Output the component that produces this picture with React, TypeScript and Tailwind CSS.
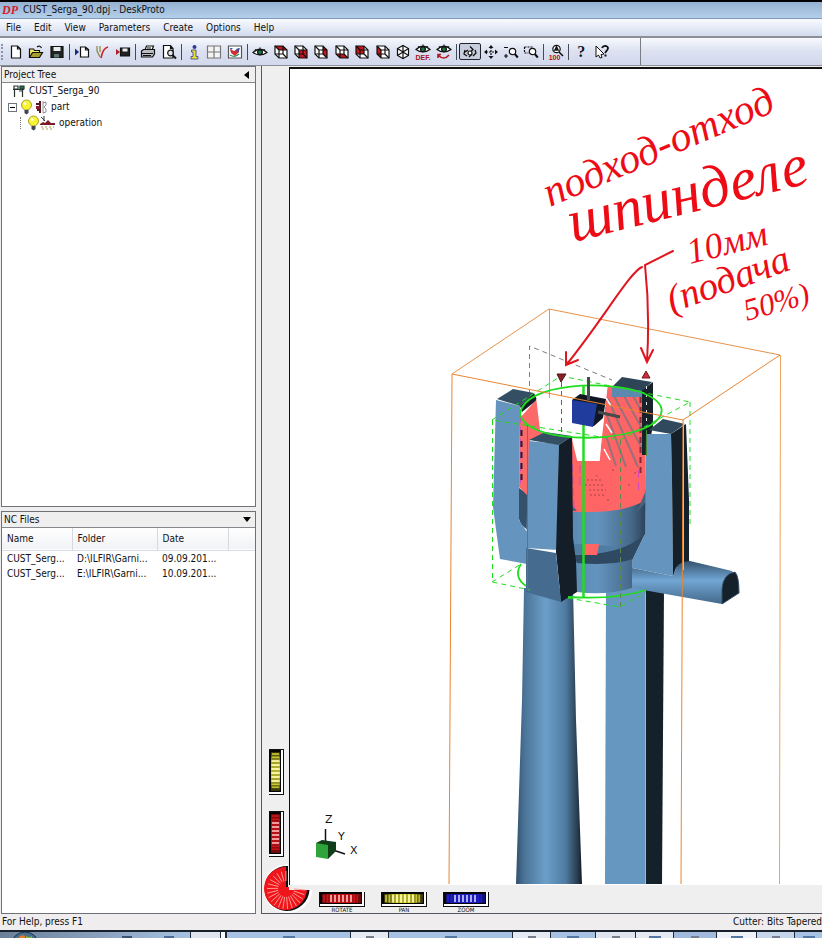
import React from 'react';

const menus = ['File', 'Edit', 'View', 'Parameters', 'Create', 'Options', 'Help'];

const files = [
  { name: 'CUST_Serg...', folder: 'D:\\ILFIR\\Garni...', date: '09.09.201...' },
  { name: 'CUST_Serg...', folder: 'E:\\ILFIR\\Garni...', date: '10.09.201...' },
];

type Kids = { children?: React.ReactNode };

function Glyph({ children }: Kids) {
  return (
    <svg width="16" height="16" viewBox="0 0 16 16" fill="none" stroke="#111" strokeWidth="1.2" aria-hidden="true">
      {children}
    </svg>
  );
}

function Tool({ label, active, children }: Kids & { label: string; active?: boolean }) {
  return (
    <button
      type="button"
      aria-label={label}
      title={label}
      className={
        active
          ? 'flex h-[17px] flex-1 items-center justify-center rounded-xs border border-[#20242c] bg-[#c9cede]'
          : 'flex h-[17px] flex-1 items-center justify-center'
      }
    >
      {children}
    </button>
  );
}

function Divider() {
  return (
    <div className="flex w-[5px] justify-center">
      <div className="h-4 w-px bg-[#444b58]" />
    </div>
  );
}

function CubeIcon({ face }: { face: string }) {
  return (
    <Glyph>
      <path d="M2 2h8l4 4v8H6l-4-4z" fill="#fff" stroke="none" />
      <path d={face} fill="#c4161c" stroke="none" />
      <path d="M2 2h8l4 4v8H6l-4-4z" />
      <path d="M6 6h8M6 6v8M2 2l4 4M10 2v8H2M10 10l4 4" />
    </Glyph>
  );
}

function Eye({ y = 0 }: { y?: number }) {
  return (
    <g transform={`translate(0 ${y})`}>
      <path d="M1 8.500Q8 2 15 8.500Q8 13.500 1 8.500z" fill="#fff" />
      <circle cx="8" cy="8.300" r="2.400" fill="#1f7a46" />
      <path d="M3 5.500l1.500 1M8 3.500v1.200M13 5.500l-1.500 1" />
    </g>
  );
}

function Magnifier() {
  return (
    <>
      <circle cx="9.500" cy="7.500" r="3.200" fill="#fff" />
      <path d="M11.800 10l3 3.500" strokeWidth="2" />
    </>
  );
}

function Toolbar() {
  return (
    <div
      role="toolbar"
      aria-label="Main toolbar"
      className="flex h-7 shrink-0 border-b border-[#8b8f96] bg-linear-to-b from-[#f7f9fd] via-[#dbe1f1] to-[#d3d9ec]"
    >
      <div className="flex w-[641px] items-center border-r border-[#777c85] pl-px">
        <div className="mr-[3px] h-4 border-l-2 border-dotted border-[#8c95aa]" />
        <div className="flex w-[61px]">
          <Tool label="New">
            <Glyph><path d="M3.500 2h6l3 3v9h-9zM9.500 2v3h3" fill="#fff" /></Glyph>
          </Tool>
          <Tool label="Open">
            <Glyph>
              <path d="M1.500 13V5h4l1 1.500h5V9" fill="#f4ea72" />
              <path d="M1.500 13.500l3-5h10l-3 5z" fill="#a79d2c" />
              <path d="M9 3q3-2 4.500 1" />
            </Glyph>
          </Tool>
          <Tool label="Save">
            <Glyph>
              <path d="M2 2.500h12v11H2z" fill="#222" />
              <path d="M4.500 3h7v4h-7z" fill="#e9edf2" stroke="none" />
              <path d="M5 10h5v3.500H5z" fill="#5d7a70" stroke="none" />
            </Glyph>
          </Tool>
        </div>
        <Divider />
        <div className="flex w-[61px]">
          <Tool label="Import geometry">
            <Glyph>
              <path d="M1 4.500l4 3.500-4 3.500z" fill="#1b2a80" stroke="none" />
              <path d="M6.500 3h5l3 2.500v7.500h-8zM11.500 3v3h3" fill="#fff" />
            </Glyph>
          </Tool>
          <Tool label="Calculate toolpaths">
            <Glyph>
              <path d="M3 2v5l3 6M6 2v6" stroke="#8e8436" />
              <path d="M7 14Q9 4 14 3" stroke="#d21f28" strokeWidth="1.600" />
            </Glyph>
          </Tool>
          <Tool label="Write NC file">
            <Glyph>
              <path d="M1 5l4 3-4 3z" fill="#b01e2a" stroke="none" />
              <path d="M5.500 4h9v8h-9z" fill="#222" />
              <path d="M7.500 4.500h5v3h-5z" fill="#eee" stroke="none" />
            </Glyph>
          </Tool>
        </div>
        <Divider />
        <div className="flex w-[41px]">
          <Tool label="Print">
            <Glyph>
              <path d="M5 6l1.500-4h7L12 6" fill="#fff" />
              <path d="M1.500 7l2-1.500h11V10l-2 3h-11z" fill="#b9bdc4" />
              <path d="M2 9.500h11M3 11.500h8M7 4h4" />
            </Glyph>
          </Tool>
          <Tool label="Print preview">
            <Glyph>
              <path d="M2.500 1.500h7l2.500 3v9.500h-9.500zM9.500 1.500v3h2.500" fill="#fff" />
              <circle cx="9.500" cy="9" r="2.800" fill="#dfe5ee" />
              <path d="M11.500 11l3.500 3.500" strokeWidth="1.800" />
            </Glyph>
          </Tool>
        </div>
        <Divider />
        <div className="flex w-[61px]">
          <Tool label="Information">
            <Glyph>
              <path d="M5.500 6h4.500v6.500h2V15H5v-2.500h2V8H5.500z" fill="#ece02c" stroke="#39408e" strokeWidth="0.800" />
              <circle cx="8.500" cy="3" r="2" fill="#2c3a9a" stroke="none" />
            </Glyph>
          </Tool>
          <Tool label="Four views">
            <Glyph><path d="M1.500 2h13v12h-13zM8 2v12M1.500 8h13" fill="#f4f4f4" stroke="#777" /></Glyph>
          </Tool>
          <Tool label="Render">
            <Glyph>
              <path d="M1.500 2h13v12h-13z" fill="#fff" stroke="#555" />
              <path d="M3 5l4 2 5-3v4l-4 4-4-3z" fill="#cf3038" stroke="none" />
              <path d="M9 5l4-1-2 5zM3 4h3l-2 2z" fill="#2b56a5" stroke="none" />
              <path d="M3 11q5 3 9-1" stroke="#329060" />
            </Glyph>
          </Tool>
        </div>
        <Divider />
        <div className="flex w-[204px]">
          <Tool label="View"><Glyph><Eye /></Glyph></Tool>
          <Tool label="Top view"><CubeIcon face="M2 2h8l4 4H6z" /></Tool>
          <Tool label="Front view"><CubeIcon face="M6 6h8v8H6z" /></Tool>
          <Tool label="Right view"><CubeIcon face="M10 2l4 4v8l-4-4z" /></Tool>
          <Tool label="Bottom view"><CubeIcon face="M2 10h8l4 4H6z" /></Tool>
          <Tool label="Back view"><CubeIcon face="M2 2h8v8H2z" /></Tool>
          <Tool label="Left view"><CubeIcon face="M2 2l4 4v8l-4-4z" /></Tool>
          <Tool label="Isometric view">
            <Glyph>
              <path d="M8 1.500l5.500 3v7L8 14.500l-5.500-3v-7z" fill="#fff" />
              <path d="M8 1.500v13M2.500 4.500l11 7M13.500 4.500l-11 7" />
            </Glyph>
          </Tool>
          <Tool label="Default view">
            <Glyph>
              <Eye y={-3} />
              <text x="8" y="16" textAnchor="middle" fill="#a5121a" stroke="none" fontSize="7" fontWeight="700" fontFamily="Liberation Sans, sans-serif">DEF.</text>
            </Glyph>
          </Tool>
          <Tool label="Previous view">
            <Glyph>
              <Eye y={-3} />
              <path d="M2 11q6 6 11 0M2 14v-3.500h3" stroke="#b11a22" strokeWidth="1.600" />
            </Glyph>
          </Tool>
        </div>
        <Divider />
        <div className="flex w-[82px]">
          <Tool label="Rotate" active>
            <Glyph>
              <path d="M8 2.500l3 3-3 3M3 6l-1 4 3 2M13 6l1 3-3 3M6 6l-3 2M7 13l3-3" strokeWidth="1.300" />
              <circle cx="8" cy="9" r="2" fill="#fff" />
            </Glyph>
          </Tool>
          <Tool label="Pan">
            <Glyph>
              <path d="M8 3v10M3 8h10" strokeDasharray="2 1" />
              <path d="M8 1l2.500 3h-5zM8 15l2.500-3h-5zM1 8l3-2.500v5zM15 8l-3-2.500v5z" fill="#111" stroke="none" />
            </Glyph>
          </Tool>
          <Tool label="Zoom">
            <Glyph><path d="M1 3.500h4M1 12h4M3 10v4" /><Magnifier /></Glyph>
          </Tool>
          <Tool label="Zoom window">
            <Glyph><path d="M1.500 3h8M1.500 3v6h4" strokeDasharray="2 1" /><Magnifier /></Glyph>
          </Tool>
        </div>
        <Divider />
        <div className="flex w-[20px]">
          <Tool label="Zoom 100%">
            <Glyph>
              <circle cx="8.500" cy="5" r="3.700" fill="#fff" />
              <path d="M8.500 3l-1.500 3h3zM11 8l4 4" strokeWidth="1.600" />
              <text x="6.500" y="16" textAnchor="middle" fill="#a5121a" stroke="none" fontSize="7" fontWeight="700" fontFamily="Liberation Sans, sans-serif">100</text>
            </Glyph>
          </Tool>
        </div>
        <Divider />
        <div className="flex w-[41px]">
          <Tool label="Help">
            <span className="font-['Liberation_Serif',serif] text-base leading-4 font-bold text-[#111827]">?</span>
          </Tool>
          <Tool label="Context help">
            <Glyph>
              <path d="M2 2l8 8-3 .5 1 3-2 .5-1.500-3-2.500 2z" fill="#fff" strokeWidth="1" />
              <path d="M8 4q1-2.500 4-2 3 1 1.500 3.500L11 9M10.500 11.500h2" strokeWidth="1.800" />
            </Glyph>
          </Tool>
        </div>
      </div>
    </div>
  );
}

function Bulb() {
  return (
    <svg width="13" height="16" viewBox="0 0 13 16" aria-hidden="true">
      <circle cx="6.500" cy="6" r="5" fill="#f8f431" stroke="#aaa02a" />
      <circle cx="5" cy="4.500" r="1.500" fill="#fffde0" />
      <path d="M4.500 11h4v3l-2 1.500-2-1.500z" fill="#3f4450" />
    </svg>
  );
}

function ProjectTree() {
  return (
    <section className="flex h-[441px] shrink-0 flex-col border border-[#6e7178] bg-white">
      <header className="flex h-4 shrink-0 items-center justify-between border-b border-[#85878c] bg-[#efeff0] pr-1.5 pl-0.5">
        <h2>Project Tree</h2>
        <button type="button" aria-label="Collapse project tree">
          <svg width="5" height="8" viewBox="0 0 5 8"><path d="M5 0v8L0 4z" /></svg>
        </button>
      </header>
      <ul className="leading-4">
        <li>
          <div className="flex h-4 items-center gap-1 pl-[10px]">
            <svg width="13" height="12" viewBox="0 0 13 12" fill="none" stroke="#26332e" strokeWidth="1.200" aria-hidden="true">
              <path d="M1 4.500h11M2.500 5v7M10.500 5v7M2 1h4v3H2zM7 6h3" />
              <path d="M8 1h4v3H8z" fill="#24764f" />
            </svg>
            CUST_Serga_90
          </div>
          <ul>
            <li>
              <div className="flex h-4 items-center pl-1.5">
                <button type="button" aria-label="Collapse part" className="mr-[3px] flex h-[9px] w-[9px] items-center justify-center border border-[#6f7682] bg-white">
                  <span className="h-px w-[5px] bg-black" />
                </button>
                <Bulb />
                <svg className="mr-1 ml-0.5" width="12" height="14" viewBox="0 0 12 14" aria-hidden="true">
                  <path d="M5 1v12M1 4h4M2 10h3" stroke="#5b1520" strokeWidth="2" />
                  <path d="M1 6h4v3H1z" fill="#8c1d2a" />
                  <path d="M8 1v12M8 3l3-1v3l-2 2 2 2v3l-3 1" fill="none" stroke="#8b8d90" />
                </svg>
                part
              </div>
              <ul>
                <li className="flex h-4 items-center pl-[18px]">
                  <span className="mr-[6px] h-3 border-l border-dotted border-[#777]" />
                  <Bulb />
                  <svg className="mr-1" width="15" height="14" viewBox="0 0 15 14" aria-hidden="true">
                    <path d="M0 8l3-2 2 1 3-3 3 3h4v2H0z" fill="#7b1b28" />
                    <path d="M1 1l4 4M4 0v5" stroke="#333" />
                    <path d="M1 11h13M2 13h12" stroke="#a89b52" strokeDasharray="2 2" />
                  </svg>
                  operation
                </li>
              </ul>
            </li>
          </ul>
        </li>
      </ul>
    </section>
  );
}

function NcFiles() {
  return (
    <section className="mt-1 flex min-h-0 flex-1 flex-col border border-[#6e7178] bg-white">
      <header className="flex h-4 shrink-0 items-center justify-between border-b border-[#85878c] bg-[#efeff0] pr-1 pl-0.5">
        <h2>NC Files</h2>
        <button type="button" aria-label="Collapse NC files">
          <svg width="8" height="5" viewBox="0 0 8 5"><path d="M0 0h8L4 5z" /></svg>
        </button>
      </header>
      <table className="w-full table-fixed text-left">
        <colgroup>
          <col className="w-[70px]" />
          <col className="w-[85px]" />
          <col className="w-[71px]" />
          <col />
        </colgroup>
        <thead>
          <tr className="h-[22px] border-b border-[#d9dadd] bg-linear-to-b from-white to-[#f1f2f5]">
            <th scope="col" className="border-r border-[#d6d9df] pl-[5px] font-normal">Name</th>
            <th scope="col" className="border-r border-[#d6d9df] pl-[5px] font-normal">Folder</th>
            <th scope="col" className="border-r border-[#d6d9df] pl-[5px] font-normal">Date</th>
            <td />
          </tr>
        </thead>
        <tbody>
          {files.map((f) => (
            <tr key={f.folder} className="h-[15px] leading-[15px]">
              <td className="pl-[5px] whitespace-nowrap">{f.name}</td>
              <td className="pl-[5px] whitespace-nowrap">{f.folder}</td>
              <td className="pl-[5px] whitespace-nowrap">{f.date}</td>
              <td />
            </tr>
          ))}
        </tbody>
      </table>
    </section>
  );
}

const wheelTone = {
  yellow: ['#2c2a08', '#d9d733', '#fbfac0'],
  red: ['#650a0c', '#d3151b', '#ffc9c9'],
  blue: ['#10126f', '#2320d8', '#dcdcff'],
};

function Wheel({ tone, vertical, label }: { tone: keyof typeof wheelTone; vertical?: boolean; label: string }) {
  const [dark, mid, light] = wheelTone[tone];
  const id = `${tone}-${vertical ? 'v' : 'h'}`;
  const ribs = [5, 8, 12, 16, 20, 24, 28, 32, 35, 38];
  return (
    <button type="button" aria-label={label} className="block">
      <svg width={vertical ? 16 : 46} height={vertical ? 46 : 16} viewBox={vertical ? '0 0 16 46' : '0 0 46 16'} className="block">
        <defs>
          <linearGradient id={id}>
            <stop offset="0" stopColor={dark} />
            <stop offset="0.250" stopColor={mid} />
            <stop offset="0.500" stopColor={tone === 'yellow' ? '#f1ef4a' : mid} />
            <stop offset="0.750" stopColor={mid} />
            <stop offset="1" stopColor={dark} />
          </linearGradient>
        </defs>
        <g transform={vertical ? 'matrix(0 1 1 0 0 0)' : undefined}>
          <path d="M0 1h46v15H0z" fill="#111" />
          <path d="M1 1h44v14H1z" fill="#fff" />
          <path d="M1 1h42v12H1z" fill="#050505" />
          <path d="M3 3h39v9H3z" fill={`url(#${id})`} />
          {ribs.map((x) => (
            <path key={x} d={`M${x} 4v7`} stroke={x > 11 && x < 33 ? light : mid} strokeWidth="1.500" />
          ))}
          {ribs.map((x) => (
            <path key={x} d={`M${x + 2} 3v9`} stroke={dark} strokeOpacity="0.600" />
          ))}
        </g>
      </svg>
    </button>
  );
}

function Dial() {
  const spokes = Array.from({ length: 20 }, (_, i) => (i * 14.2 * Math.PI) / 180);
  return (
    <button type="button" aria-label="Roll view" className="absolute bottom-0 left-0.5">
      <svg width="49" height="50" viewBox="0 0 49 50" className="block">
        <path d="M24 2.500A23 23 0 1 0 47 27" fill="none" stroke="#fff" strokeWidth="3" />
        <path d="M24 3A22.500 22.500 0 1 0 45.500 27H24z" fill="#111" />
        <path d="M22 4A21.500 21.500 0 1 0 43 27H25V24H22z" fill="#f0151b" />
        {spokes.map((a) => (
          <line
            key={a}
            x1={22 + 8 * Math.cos(a)}
            y1={26 + 8 * Math.sin(a)}
            x2={22 + 19 * Math.cos(a)}
            y2={27 + 19 * Math.sin(a)}
            stroke="#ff9a94"
          />
        ))}
      </svg>
    </button>
  );
}

function Scene() {
  return (
    <svg className="absolute inset-0 h-full w-full" role="img" aria-label="3D view of the ring with its supports">
      <defs>
        <linearGradient id="col">
          <stop offset="0" stopColor="#31506b" />
          <stop offset="0.120" stopColor="#4a7296" />
          <stop offset="0.450" stopColor="#6c9fc9" />
          <stop offset="0.750" stopColor="#4f7ba1" />
          <stop offset="0.940" stopColor="#26394b" />
          <stop offset="1" stopColor="#111b24" />
        </linearGradient>
        <linearGradient id="drum">
          <stop offset="0" stopColor="#5b8ab2" />
          <stop offset="0.350" stopColor="#6394bf" />
          <stop offset="0.800" stopColor="#46698a" />
          <stop offset="1" stopColor="#2c4257" />
        </linearGradient>
        <linearGradient id="arm" x2="0" y2="1">
          <stop offset="0" stopColor="#34516c" />
          <stop offset="0.450" stopColor="#72a6d3" />
          <stop offset="1" stopColor="#43698b" />
        </linearGradient>
      </defs>
      <g transform="translate(-290 -69)">
        {/* stock block, rear edges */}
        <path d="M549.500 398V309M452 374L549 309L780 355" fill="none" stroke="#e6934a" />
        <path d="M780.500 355L779.500 884" fill="none" stroke="#eda45c" />
        <path d="M529.500 395V346L612 380" fill="none" stroke="#7d7d84" strokeDasharray="5 4" />

        {/* columns */}
        <path d="M524 588H573L576 720L582 884H516L522 700z" fill="url(#col)" />
        <path d="M606 588H646V884H605z" fill="#6697c1" />
        <path d="M646 588H664L662 884H645z" fill="#14202a" />
        <path d="M645.500 592V884" stroke="#91bddd" />

        {/* left post */}
        <path d="M496 400L520 406V420L519 520L527 532V564L500 559L493 507z" fill="#6595be" />
        <path d="M497 399L513 389L534 393L520 406z" fill="#344e64" />
        <path d="M520 406L534 393L537 400L522 412z" fill="#141e28" />

        {/* seat under the ring */}
        <path d="M519 488V519Q521 526 528 530V494z" fill="#34516b" />
        <path d="M572 505L646 490V534Q636 542 633 550L632 588Q605 596 577 592L572 560z" fill="url(#drum)" />
        <path d="M572 544Q614 545 617 548V551Q604 556 573 554z" fill="#527da2" />
        <path d="M573 555Q623 555 645 534L633 559Q612 566 577 563z" fill="#2e4961" />
        <path d="M584 544H599L597 555H584z" fill="#ff6665" />

        {/* ring */}
        <path d="M520 418L537 399L541 428L543 438L530 440V498L519 487z" fill="#fb6a69" />
        <path d="M607 386L645 395L646 500Q626 512 590 512H572V438L578 461H599L604 420z" fill="#ff6564" />
        <path d="M607 386L602 425L599 461M537 399L541 432M573 440L578 461" fill="none" stroke="#fff" strokeWidth="1.500" />
        <path d="M624 396L645 434M614 396L645 454M608 399L638 467M607 415L626 467M606 436L616 466M633 396L645 417" stroke="#98707a" strokeWidth="2" />
        <path d="M606 398l5 8M606 424l6 9M604 449l6 11" stroke="#fff" strokeWidth="1.500" />
        <path d="M587 480h16M585 485h20M589 490h17M590 495h14M596 475l2 2M612 470h3M628 485h2M634 473h2M607 500h3" stroke="#a04750" strokeDasharray="2 2" />
        <path d="M637 512L646 490V502zM572 505L577 511H572z" fill="#48647c" />
        <path d="M520.500 415V486M571 440l3 68M580 465v20M638.500 470v24" stroke="#d548b8" strokeDasharray="8 4" />
        <path d="M521.500 430V485" stroke="#222" strokeWidth="2" strokeDasharray="6 5" />

        {/* rear post */}
        <path d="M642 390L653 382V426L647 455H642z" fill="#17222b" />
        <path d="M612 387L642 391V397H612z" fill="#5c89b0" />
        <path d="M612 387L622 377L652 382L642 391z" fill="#2e4558" />
        <path d="M640.500 397V475" stroke="#8a2a35" strokeWidth="2" strokeDasharray="6 4" />
        <path d="M646.500 386V428" stroke="#e8e8e8" strokeDasharray="3 5" />

        {/* sprue arm and right post */}
        <path d="M632 568L673 576L677 566Q682 560 690 561L732 571Q739 580 722 604L632 588z" fill="url(#arm)" />
        <path d="M722 604V589Q723 574 735 572Q739 576 739 593z" fill="#14202a" stroke="#355169" />
        <path d="M646 434L671 434L672 480L673 576L632 568L633 558L645 534z" fill="#6595be" />
        <path d="M649 430L663 419L685 424L671 434z" fill="#31495c" />
        <path d="M671 434L686 424L689 500V561Q679 562 676 568L673 576L672 480z" fill="#14202a" />

        {/* front post */}
        <path d="M529 441L559 444L558 550L526 548z" fill="#6595be" />
        <path d="M529 440L545 432L572 436L559 445z" fill="#344e63" />
        <path d="M559 445L572 436L573 538L576 561L577 592L561 602L556 552z" fill="#131e28" />
        <path d="M526 548L556 553L561 602L526 592z" fill="#456c8f" />

        {/* machining cylinder */}
        <g fill="none" stroke="#20dd20">
          <path d="M520 414C524 382 610 380 643 393C674 406 663 424 633 432C590 443 525 438 520 414" strokeWidth="1.800" />
          <path d="M583.500 386V598" strokeWidth="2.500" />
          <path d="M568 597Q615 600 646 590M521 564Q513 577 526 586" strokeWidth="1.800" />
          <path d="M492 420L561 376L690 402L620 440zM492.500 420V582L530 590M492 582L521 564M690 402V526M568 598L620 607L646 592" strokeDasharray="5 4" />
          <path d="M620.500 440V607" stroke="#5a8a4c" strokeDasharray="5 4" />
          <path d="M527.500 425V590M646.500 430V456" stroke="#4a8c3a" />
          <path d="M561.500 382V432" stroke="#4f7848" strokeDasharray="5 4" />
        </g>

        {/* origin cube */}
        <path d="M572 400L580 394L606 399L603 418L594 426H590z" fill="#111625" />
        <path d="M572 400L597 404L593 427L572 423z" fill="#203d9d" />
        <path d="M588.500 377V400M598 412L620 417" stroke="#454a4a" strokeWidth="3" />
        <path d="M557 374H566L561 382z" fill="#8b2028" stroke="#4c1418" />
        <path d="M642 378H650L646 371z" fill="#c82f3b" stroke="#701a22" />

        {/* stock block, front edges */}
        <path d="M449 884L452 374L683 420L681 884M683 420L780 355" fill="none" stroke="#e88532" />
        <path d="M683.500 420V570" stroke="#dccb40" />

        {/* pen annotations */}
        <g fill="none" stroke="#e0151f" strokeWidth="2" strokeLinecap="round">
          <path d="M673 251L645 265Q650 312 647 361M641 348L647 362L653 350M642 267C630 272 604 318 567 364M566 352V365L578 360" />
        </g>
        <g fill="#ed0c16" fontFamily="Liberation Serif, serif" fontStyle="italic">
          <text transform="translate(550 207) rotate(-23)" fontSize="42">подход-отход</text>
          <text transform="translate(573 242) rotate(-14)" fontSize="60">шпинделе</text>
          <text transform="translate(690 264) rotate(-14)" fontSize="36">10мм</text>
          <text transform="translate(672 313) rotate(-20)" fontSize="39">(подача</text>
          <text transform="translate(747 321) rotate(-16)" fontSize="31">50%)</text>
        </g>

        {/* axis triad */}
        <path d="M325.500 829V842M333 850L345 854" stroke="#111" strokeWidth="1.500" />
        <path d="M316 843L322 840L336 842V851L328 859z" fill="#123d1a" />
        <path d="M316 843L328 845V859L316 857z" fill="#2ea43a" />
        <g fontFamily="DejaVu Sans, sans-serif" fontSize="11" fill="#111">
          <text x="325" y="823">Z</text>
          <text x="338" y="840">Y</text>
          <text x="350" y="854">X</text>
        </g>
      </g>
    </svg>
  );
}

const tasks = [
  'w-[124px] bg-[#a6c1e1]',
  'w-[38px] bg-[#e4e9f2]',
  'w-[124px] bg-[#a6c1e1]',
  'w-[38px] bg-[#e4e9f2]',
  'w-[45px] bg-[#a6c1e1]',
  'w-[40px] bg-[#dfe5ef]',
  'w-[38px] bg-[#e4e9f2]',
  'w-[43px] bg-[#a0b9dd]',
  'w-[40px] bg-[#eef1f6]',
  'w-[38px] bg-[#c6d6ea]',
  'flex-1 bg-[#a6c1e1]',
];

function Taskbar() {
  return (
    <footer className="flex h-2 shrink-0 overflow-hidden border-t-2 border-[#18202b] bg-[#dfe6f0]" aria-label="Taskbar">
      <div className="flex w-[190px] shrink-0 justify-between bg-linear-to-r from-[#6b7f98] to-[#a6c1e1] pr-4 pl-2.5">
        <svg width="30" height="6" viewBox="0 0 30 6" aria-hidden="true">
          <circle cx="15" cy="14" r="14" fill="#466f8f" stroke="#1c3448" />
          <path d="M8 6q3-4 7-2v2z" fill="#e8792f" />
          <path d="M16 4q3 2 6 0v2h-6z" fill="#7fb741" />
        </svg>
        <div className="flex gap-8 pt-1">
          <div className="h-1 w-2.5 bg-[#3b5275]" />
          <div className="h-1 w-2.5 bg-[#4b6c98]" />
        </div>
      </div>
      <div className="w-[30px] shrink-0 border-l border-[#222c3a] bg-[#dfe5ef]" />
      <div className="w-1.5 shrink-0 border-x border-[#222c3a] bg-white" />
      {tasks.map((t, i) => (
        <div key={i} className={`${t} flex justify-center border-l border-[#222c3a] pt-1`}>
          <div className={i % 2 ? 'h-1 w-2 bg-[#777e8d]' : 'h-1 w-3 bg-[#5478a5]'} />
        </div>
      ))}
    </footer>
  );
}

export default function App() {
  return (
    <div className="flex h-screen flex-col overflow-hidden bg-[#efeded] font-['DejaVu_Sans_Condensed','DejaVu_Sans',sans-serif] text-[10px] leading-[14px] text-[#111]">
      <header className="flex h-[19px] shrink-0 items-center border-t-2 border-b border-t-black border-b-[#7d9abb] bg-linear-to-b from-[#94b1d2] to-[#b4cfe9] pl-0.5">
        <span className="w-[21px] font-['Liberation_Serif',serif] text-xs font-bold text-[#d6202a] italic" aria-hidden="true">DP</span>
        <h1>CUST_Serga_90.dpj - DeskProto</h1>
      </header>
      <nav className="flex h-[19px] shrink-0 items-center gap-[13px] border-b-2 border-double border-[#8b8f96] bg-linear-to-b from-[#f8fafe] to-[#d3dbef] pl-1.5">
        {menus.map((m) => (
          <button type="button" key={m}>{m}</button>
        ))}
      </nav>
      <Toolbar />
      <main className="flex min-h-0 flex-1">
        <aside className="flex w-[256px] shrink-0 flex-col pl-px">
          <ProjectTree />
          <NcFiles />
        </aside>
        <div className="ml-[5px] flex min-w-0 flex-1 flex-col border-b border-l border-[#55585e] bg-[#efefef]">
          <div className="relative flex min-h-0 flex-1">
            <div className="flex w-[27px] shrink-0 flex-col items-center justify-end gap-4 pb-[28px]">
              <Wheel tone="yellow" vertical label="Tilt view" />
              <Wheel tone="red" vertical label="Turn view" />
            </div>
            <div className="relative mt-px flex-1 overflow-hidden border-t-2 border-l border-[#111] bg-white">
              <Scene />
            </div>
          </div>
          <div className="relative flex h-7 shrink-0 gap-4 pt-[6px] pl-[57px]">
            <Dial />
            {([['red', 'ROTATE'], ['yellow', 'PAN'], ['blue', 'ZOOM']] as const).map(([tone, name]) => (
              <div key={name} className="flex flex-col items-center">
                <Wheel tone={tone} label={name} />
                <span className="text-[6px] leading-[6px]">{name}</span>
              </div>
            ))}
          </div>
        </div>
      </main>
      <div className="flex h-4 shrink-0 items-center justify-between pl-0.5 whitespace-nowrap">
        <span>For Help, press F1</span>
        <span>Cutter: Bits Tapered</span>
      </div>
      <Taskbar />
    </div>
  );
}
